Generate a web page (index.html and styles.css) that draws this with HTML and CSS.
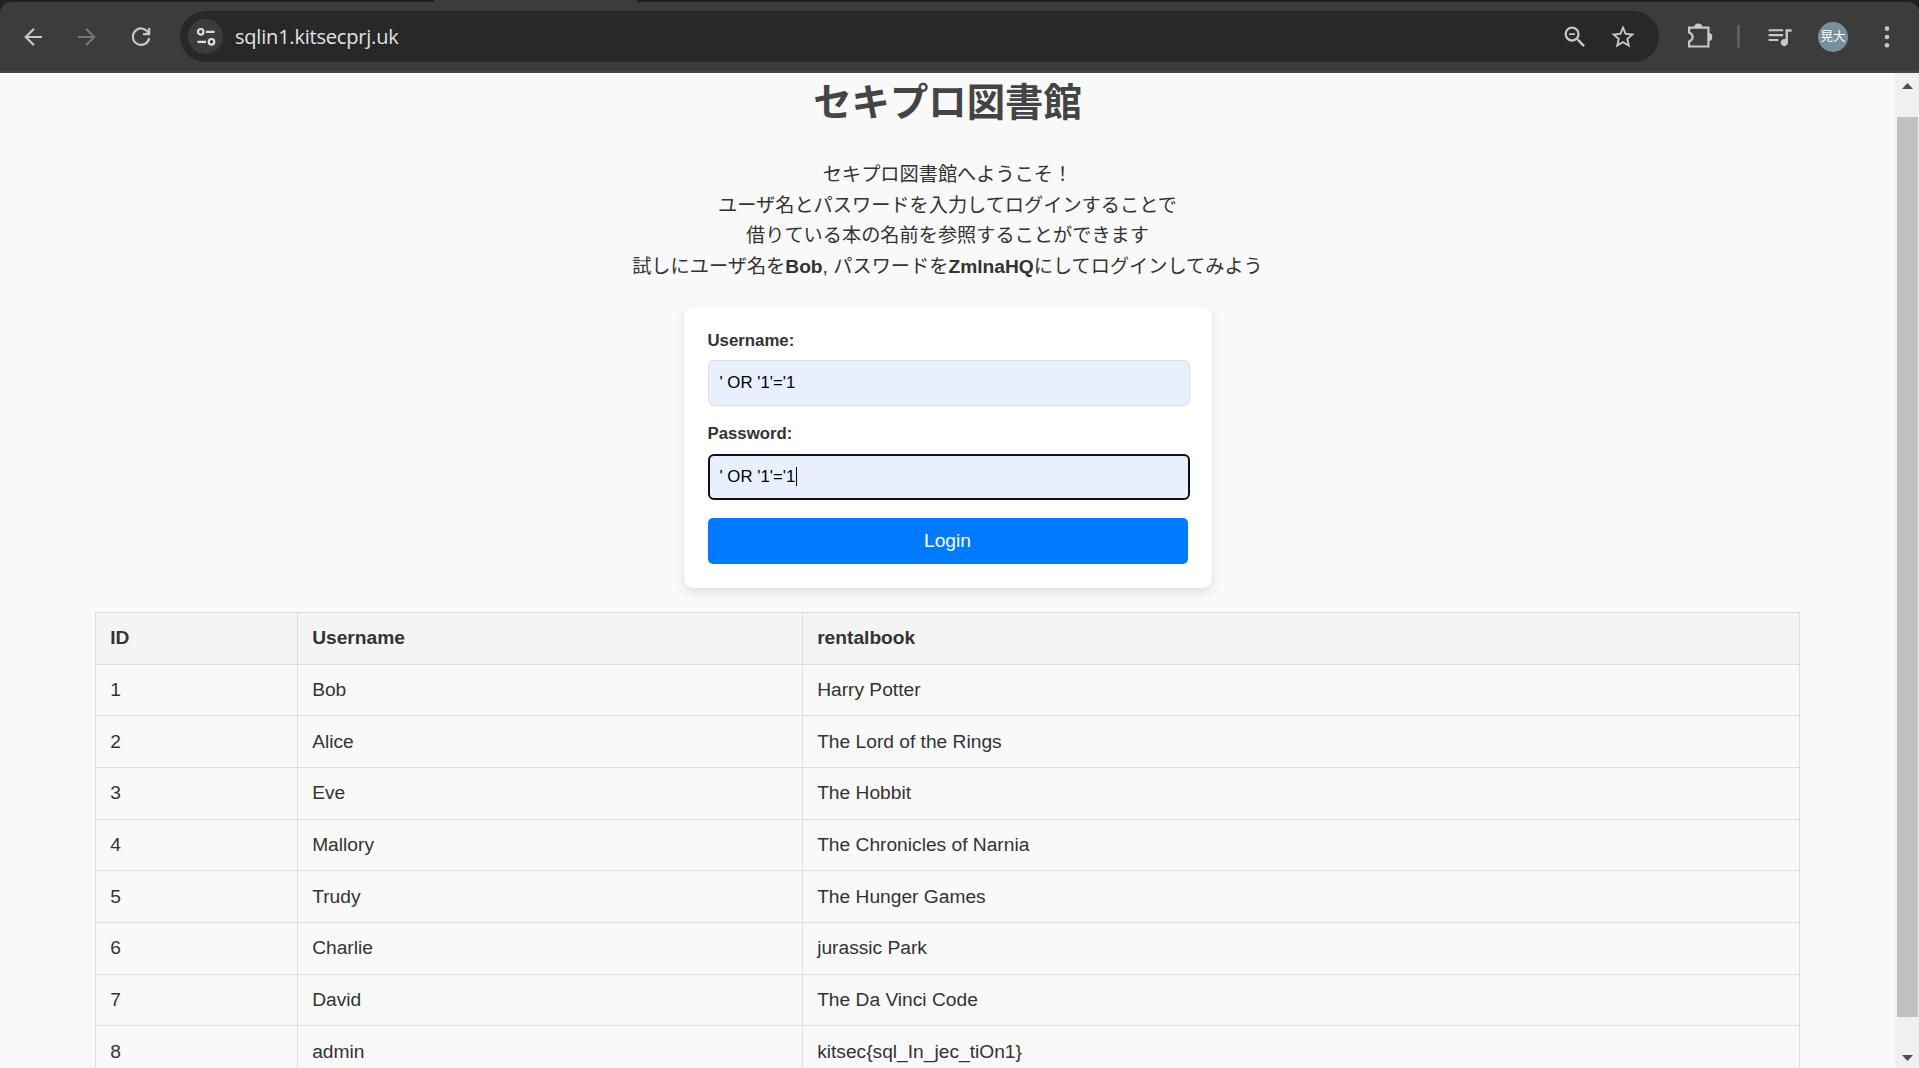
FILE: index.html
```html
<!DOCTYPE html>
<html lang="ja">
<head>
    <meta charset="UTF-8">
    <title>セキプロ図書館</title>
    <link rel="stylesheet" href="styles.css">
</head>
<body>
    <div class="browser">
        <div class="tabs"><span class="tab"></span></div>
        <div class="toolbar">
            <svg class="icon" viewBox="0 0 28 28"><path d="M23 14H7M15 5.700L6.700 14l8.300 8.300" class="line"/></svg>
            <svg class="icon forward" viewBox="0 0 28 28"><path d="M5 14h16M13 5.700l8.300 8.300-8.300 8.300" class="line"/></svg>
            <svg class="icon reload" viewBox="0 0 28 28"><path d="M21.700 10.600A8.200 8.200 0 1 0 22.200 15M22.200 5v6.200h-6.200" class="line"/></svg>
            <div class="omnibox">
                <div class="site">
                    <svg width="20" height="20" viewBox="0 0 20 20"><circle cx="4.700" cy="4.800" r="2.800" class="line"/><path d="M10 4.800h8.500M1.500 14.800h8.500" class="line"/><circle cx="15.500" cy="14.800" r="2.800" class="line"/></svg>
                </div>
                <span class="url">sqlin1.kitsecprj.uk</span>
                <svg class="icon" viewBox="0 0 24 24"><path d="M15.500 14h-.79l-.28-.27A6.470 6.470 0 0 0 16 9.500 6.500 6.500 0 1 0 9.500 16c1.610 0 3.090-.59 4.230-1.570l.27.28v.79l5 4.990L20.490 19l-4.990-5zm-6 0C7.010 14 5 11.990 5 9.500S7.010 5 9.500 5 14 7.010 14 9.500 11.990 14 9.500 14zM7 8.800h5v1.500H7z"/></svg>
                <svg class="icon star" viewBox="0 0 24 24"><path d="M22 9.240l-7.190-.62L12 2 9.190 8.630 2 9.240l5.460 4.730L5.820 21 12 17.270 18.180 21l-1.630-7.030L22 9.240zM12 15.400l-3.760 2.270 1-4.280-3.320-2.880 4.380-.38L12 6.100l1.710 4.040 4.380.38-3.320 2.880 1 4.280L12 15.400z"/></svg>
            </div>
            <svg class="icon puzzle" viewBox="0 0 28 28"><path d="M4.100 4.700h19.300v18.800H4.100v-4.900c4.800-2.200 4.800-6.800 0-9z" class="line"/><path d="M9.300 4a4 3.500 0 0 1 8 0zM24 10a3.300 4 0 0 1 0 8z"/></svg>
            <span class="divider"></span>
            <svg class="icon music" viewBox="0 0 24 24"><path d="M15 6H3v1.700h12zm0 4H3v1.700h12zM3 15.700h8V14H3zM17 6v8.180c-.31-.11-.65-.18-1-.18-1.660 0-3 1.340-3 3s1.340 3 3 3 3-1.340 3-3V8h3V6h-5z"/></svg>
            <span class="avatar">晃大</span>
            <svg class="icon menu" viewBox="0 0 28 28"><circle cx="14" cy="5.600" r="2.300"/><circle cx="14" cy="14" r="2.300"/><circle cx="14" cy="22.200" r="2.300"/></svg>
        </div>
    </div>

    <div class="view">
        <div class="page">
            <h1>セキプロ図書館</h1>
            <p class="intro">
                セキプロ図書館へようこそ！<br>
                ユーザ名とパスワードを入力してログインすることで<br>
                借りている本の名前を参照することができます<br>
                試しにユーザ名を<b>Bob</b>, パスワードを<b>ZmlnaHQ</b>にしてログインしてみよう
            </p>
            <form class="login">
                <label for="username">Username:</label>
                <input type="text" id="username" value="' OR '1'='1">
                <label for="password">Password:</label>
                <div class="field">
                    <input type="text" id="password" class="active" value="' OR '1'='1">
                    <span class="caret"></span>
                </div>
                <button type="button">Login</button>
            </form>
            <table>
                <tr><th class="col-id">ID</th><th class="col-name">Username</th><th>rentalbook</th></tr>
                <tr><td>1</td><td>Bob</td><td>Harry Potter</td></tr>
                <tr><td>2</td><td>Alice</td><td>The Lord of the Rings</td></tr>
                <tr><td>3</td><td>Eve</td><td>The Hobbit</td></tr>
                <tr><td>4</td><td>Mallory</td><td>The Chronicles of Narnia</td></tr>
                <tr><td>5</td><td>Trudy</td><td>The Hunger Games</td></tr>
                <tr><td>6</td><td>Charlie</td><td>jurassic Park</td></tr>
                <tr><td>7</td><td>David</td><td>The Da Vinci Code</td></tr>
                <tr><td>8</td><td>admin</td><td>kitsec{sql_In_jec_tiOn1}</td></tr>
            </table>
        </div>
        <div class="scrollbar">
            <svg width="11" height="6" viewBox="0 0 11 6"><path d="M0 6L5.500 0 11 6z"/></svg>
            <div class="thumb"></div>
            <svg width="11" height="6" viewBox="0 0 11 6"><path d="M0 0h11L5.500 6z"/></svg>
        </div>
    </div>
</body>
</html>
```
FILE: styles.css
```css
* {
    box-sizing: border-box;
}
body {
    margin: 0;
    height: 1068px;
    display: flex;
    flex-direction: column;
    overflow: hidden;
    font-family: "Liberation Sans", Arial, "Noto Sans CJK JP", sans-serif;
    font-size: 19.2px;
    color: #333;
    background-color: #f9f9f9;
}

/* browser bar */
.browser {
    flex: none;
    height: 73px;
    background-color: #1f2020;
}
.tabs {
    height: 2px;
    padding-left: 434px;
}
.tab {
    display: block;
    width: 203px;
    height: 2px;
    background-color: #3c3c3c;
}
.toolbar {
    display: flex;
    align-items: center;
    height: 71px;
    padding-left: 19px;
    border-bottom: 2px solid #484848;
    border-radius: 11px 11px 0 0;
    background-color: #3c3c3c;
}
.icon {
    flex: none;
    width: 28px;
    height: 28px;
    fill: #c7c7c7;
}
.line {
    fill: none;
    stroke: #c7c7c7;
    stroke-width: 2.2;
}
.forward,
.reload {
    margin-left: 26px;
}
.forward .line {
    stroke: #757575;
}
.omnibox {
    display: flex;
    align-items: center;
    width: 1479px;
    height: 51px;
    margin-left: 25px;
    padding: 0 22px 0 8px;
    border-radius: 26px;
    background-color: #282828;
}
.site {
    display: flex;
    align-items: center;
    justify-content: center;
    width: 35px;
    height: 35px;
    border-radius: 50%;
    background-color: #3c3c3c;
}
.site .line {
    stroke: #dedede;
}
.url {
    flex: 1;
    margin-left: 12px;
    font-family: "Open Sans", "Noto Sans", sans-serif;
    font-size: 20px;
    letter-spacing: -0.2px;
    color: #e3e3e3;
}
.star {
    margin-left: 20px;
}
.puzzle {
    margin-left: 26px;
}
.divider {
    width: 3px;
    height: 23px;
    margin-left: 24px;
    border-radius: 1px;
    background-color: #5e5e5e;
}
.music,
.menu {
    margin-left: 25px;
}
.music {
    width: 29px;
    height: 29px;
    margin-right: -1px;
}
.avatar {
    width: 30px;
    height: 30px;
    margin-left: 25px;
    border-radius: 50%;
    background-color: #78909c;
    color: #fff;
    font-size: 12.5px;
    line-height: 30px;
    text-align: center;
    white-space: nowrap;
}

/* page */
.view {
    display: flex;
    flex: 1;
    min-height: 0;
}
.page {
    flex: 1;
    overflow: hidden;
}
h1 {
    margin: 0;
    font-size: 38.4px;
    line-height: 60px;
    text-align: center;
    color: #444;
}
.intro {
    margin: 27px 0 0;
    line-height: 30.7px;
    text-align: center;
}
.login {
    width: 528px;
    height: 281px;
    margin: 24px auto 0;
    padding: 24px;
    border-radius: 9.6px;
    background-color: #fff;
    box-shadow: 0 4.8px 9.6px rgba(0, 0, 0, 0.1);
}
.login label {
    display: block;
    height: 29px;
    font-size: 16.8px;
    font-weight: bold;
    line-height: 19px;
}
.login input {
    display: block;
    width: 482px;
    height: 46px;
    padding: 1px 11px 0;
    border: 1px solid #ddd;
    border-radius: 6px;
    background-color: #e8f0fe;
    color: #000;
    font-family: inherit;
    font-size: 16.8px;
}
.login > input {
    margin-bottom: 18px;
}
.login > input + label {
    height: 30px;
}
.login .active {
    padding: 1px 10px 0;
    border: 2px solid #101010;
}
.field {
    position: relative;
    margin-bottom: 18px;
}
.caret {
    position: absolute;
    left: 88px;
    top: 13px;
    width: 1px;
    height: 19px;
    background-color: #000;
}
.login button {
    display: block;
    width: 480px;
    height: 46px;
    border: none;
    border-radius: 5px;
    background-color: #007bff;
    color: #fff;
    font-family: inherit;
    font-size: 19.2px;
}
table {
    width: 90%;
    margin: 24px auto 0;
    border-collapse: collapse;
    table-layout: fixed;
}
th,
td {
    padding: 14.4px;
    border: 1px solid #ddd;
    line-height: 21.9px;
    text-align: left;
}
th {
    background-color: #f4f4f4;
}
.col-id {
    width: 202px;
}
.col-name {
    width: 505px;
}

.scrollbar {
    display: flex;
    flex-direction: column;
    align-items: center;
    width: 24px;
    padding: 10px 0 7px;
    background-color: #f0f0f0;
    fill: #505050;
}
.thumb {
    width: 21px;
    height: 900px;
    margin: 28px 0 38px;
    background-color: #c1c1c1;
}
```
